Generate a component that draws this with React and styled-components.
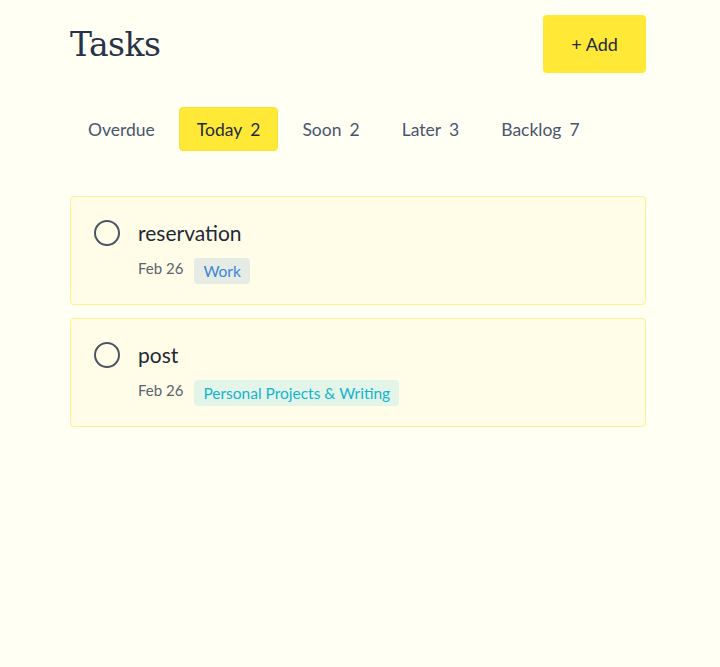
import React from 'react'
import styled, { createGlobalStyle } from 'styled-components'

const GlobalStyle = createGlobalStyle`
  body {
    margin: 0;
    background: #fffff4;
    font-family: Lato, "Noto Sans", sans-serif;
    color: #1f2937;
  }
`

const tabs = [
  { label: 'Overdue' },
  { label: 'Today', count: 2, active: true },
  { label: 'Soon', count: 2 },
  { label: 'Later', count: 3 },
  { label: 'Backlog', count: 7 },
]

const tasks = [
  { id: 1, title: 'reservation', date: 'Feb 26', tag: 'Work', tone: 'blue' },
  { id: 2, title: 'post', date: 'Feb 26', tag: 'Personal Projects & Writing', tone: 'cyan' },
]

const tones = {
  blue: { bg: '#e6ebe6', fg: '#3a86d8' },
  cyan: { bg: '#e2f5e8', fg: '#14b3cc' },
}

const App = () => {
  return (
    <Page>
      <GlobalStyle />
      <Header>
        <Title>Tasks</Title>
        <AddButton type='button'>+ Add</AddButton>
      </Header>

      <Tabs>
        {tabs.map((t) => (
          <Tab key={t.label} $active={t.active}>
            {t.label}
            {t.count != null && <Count>{t.count}</Count>}
          </Tab>
        ))}
      </Tabs>

      <List>
        {tasks.map((task) => (
          <Card key={task.id}>
            <Check />
            <Body>
              <TaskTitle>{task.title}</TaskTitle>
              <Meta>
                <DateText>{task.date}</DateText>
                <Tag $tone={task.tone}>{task.tag}</Tag>
              </Meta>
            </Body>
          </Card>
        ))}
      </List>
    </Page>
  )
}

const Page = styled.div`
  width: 576px;
  margin: 0 0 0 70px;
  padding-top: 15px;
`

const Header = styled.header`
  display: flex;
  align-items: center;
  justify-content: space-between;
`

const Title = styled.h1`
  margin: 0;
  font-family: "DejaVu Serif", "Liberation Serif", serif;
  font-weight: 400;
  font-size: 33px;
  letter-spacing: -0.5px;
  color: #28334a;
`

const AddButton = styled.button`
  width: 103px;
  height: 58px;
  border: none;
  border-radius: 4px;
  background: #ffe936;
  color: #1e293b;
  font-family: inherit;
  font-size: 18px;
  cursor: pointer;
`

const Tabs = styled.nav`
  display: flex;
  gap: 6px;
  margin-top: 34px;
`

const Tab = styled.button`
  height: 44px;
  padding: 0 17px;
  border: 1px solid ${(p) => (p.$active ? '#fbe03a' : 'transparent')};
  border-radius: 4px;
  background: ${(p) => (p.$active ? '#ffe936' : 'transparent')};
  color: ${(p) => (p.$active ? '#1e293b' : '#4b5470')};
  font-family: inherit;
  font-size: 17.5px;
  cursor: pointer;
`

const Count = styled.span`
  margin-left: 8px;
`

const List = styled.div`
  display: flex;
  flex-direction: column;
  gap: 13px;
  margin-top: 45px;
`

const Card = styled.div`
  display: flex;
  gap: 18px;
  padding: 23px 23px 20px;
  border: 1px solid #fdf191;
  border-radius: 4px;
  background: #fffde8;
`

const Check = styled.span`
  flex: none;
  width: 22px;
  height: 22px;
  border: 2px solid #4b5563;
  border-radius: 50%;
`

const Body = styled.div`
  display: flex;
  flex-direction: column;
`

const TaskTitle = styled.div`
  font-size: 21px;
  line-height: 26px;
  color: #1f2937;
`

const Meta = styled.div`
  display: flex;
  align-items: flex-start;
  gap: 11px;
  margin-top: 12px;
`

const DateText = styled.span`
  font-size: 15px;
  line-height: 20px;
  color: #5b6270;
`

const Tag = styled.span`
  padding: 0 9px;
  height: 26px;
  line-height: 27px;
  border-radius: 4px;
  font-size: 15.5px;
  background: ${(p) => tones[p.$tone].bg};
  color: ${(p) => tones[p.$tone].fg};
`

export default App
